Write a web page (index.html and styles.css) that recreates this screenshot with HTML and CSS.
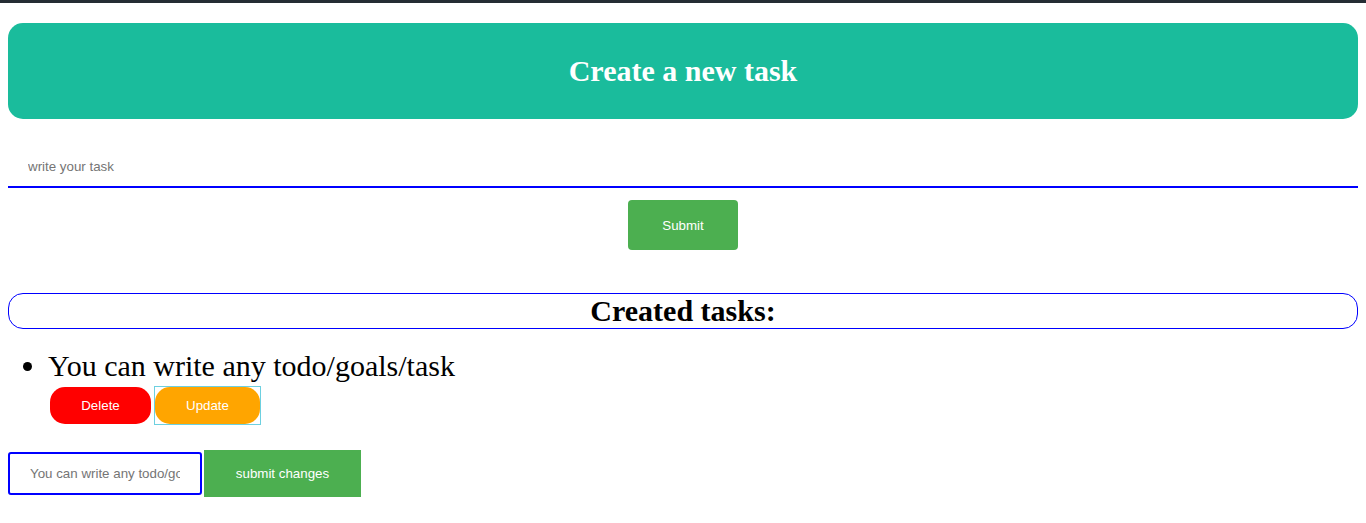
FILE: index.html
```html
<!DOCTYPE html>
<html>
<head>
<meta charset="utf-8">
<link rel="stylesheet" href="styles.css">
</head>
<body>
<div class="topbar"></div>
<div class="page">
  <header class="banner"><h1>Create a new task</h1></header>
  <input class="task-input" type="text" placeholder="write your task">
  <div class="submit-row"><button class="btn-submit">Submit</button></div>
  <h2 class="created">Created tasks:</h2>
  <ul class="tasks">
    <li>
      <span class="task-text">You can write any todo/goals/task</span>
      <div class="task-actions">
        <button class="btn-delete">Delete</button>
        <span class="focus-ring"><button class="btn-update">Update</button></span>
      </div>
    </li>
  </ul>
  <div class="edit-row">
    <input class="edit-input" type="text" placeholder="You can write any todo/goals/task">
    <button class="btn-changes">submit changes</button>
  </div>
</div>
</body>
</html>
```
FILE: styles.css
```css
html, body { margin: 0; padding: 0; background: #fff; }
body { font-family: "Liberation Serif", "Times New Roman", serif; }
.topbar { height: 3px; background: #252d34; }
.page { padding: 0 8px; }
.banner {
  margin-top: 20px;
  height: 96px;
  background: #1abc9c;
  border-radius: 15px;
  display: flex;
  align-items: center;
  justify-content: center;
}
.banner h1 {
  margin: 0;
  color: #fff;
  font-size: 30px;
  font-weight: bold;
}
.task-input {
  display: block;
  box-sizing: border-box;
  width: 100%;
  height: 42px;
  margin-top: 27px;
  border: none;
  border-bottom: 2px solid #0000ff;
  padding: 0 20px;
  font-family: "Liberation Sans", Arial, sans-serif;
  font-size: 13.333px;
  outline: none;
}
.task-input::placeholder, .edit-input::placeholder { color: #757575; }
.submit-row { display: flex; justify-content: center; margin-top: 12px; }
.btn-submit {
  width: 110px;
  height: 50px;
  background: #4caf50;
  color: #fff;
  border: none;
  border-radius: 4px;
  font-family: "Liberation Sans", Arial, sans-serif;
  font-size: 13.333px;
}
.created {
  margin: 43px 0 0;
  height: 34px;
  border: 1px solid #0000ff;
  border-radius: 15px;
  text-align: center;
  font-size: 30px;
  line-height: 34px;
  font-weight: bold;
}
.tasks {
  margin: 19px 0 0;
  padding-left: 40px;
  font-size: 30px;
  line-height: 36px;
}
.task-actions { display: flex; gap: 3px; margin: 2px 0 0 2px; align-items: center; }
.task-actions button {
  height: 37px;
  border: none;
  border-radius: 15px;
  color: #fff;
  font-family: "Liberation Sans", Arial, sans-serif;
  font-size: 13.333px;
  padding: 0;
}
.btn-delete { width: 101px; background: #ff0000; }
.focus-ring { display: flex; border: 1px solid #6dd0e0; }
.btn-update { width: 105px; background: #ffa500; }
.edit-row { display: flex; align-items: center; gap: 2px; margin-top: 25px; }
.edit-input {
  box-sizing: border-box;
  width: 194px;
  height: 43px;
  border: 2px solid #0000ff;
  border-radius: 3px;
  padding: 0 20px;
  font-family: "Liberation Sans", Arial, sans-serif;
  font-size: 13.333px;
  outline: none;
}
.btn-changes {
  width: 157px;
  height: 47px;
  background: #4caf50;
  color: #fff;
  border: none;
  font-family: "Liberation Sans", Arial, sans-serif;
  font-size: 13.333px;
}
```
